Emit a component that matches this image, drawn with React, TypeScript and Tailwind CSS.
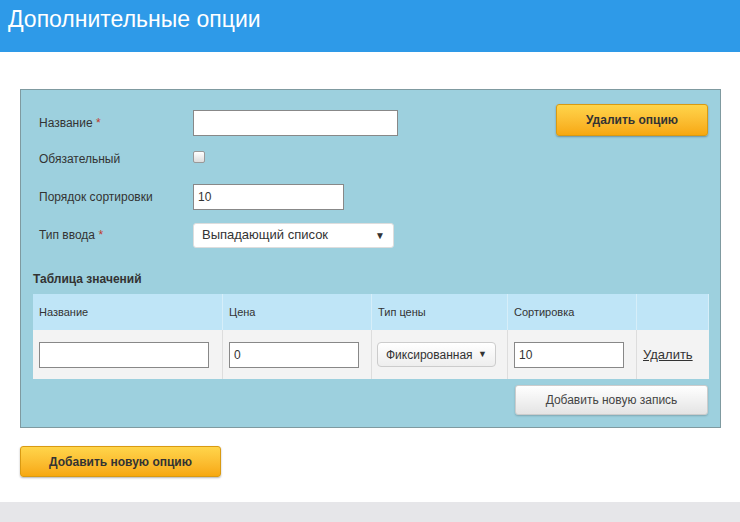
export default function App() {
  const yellow = "bg-gradient-to-b from-[#ffd54a] to-[#f7a80d] border border-[#d99a12] rounded-[3px] text-[12px] font-bold text-[#333] shadow-[0_1px_2px_rgba(0,0,0,0.3)]";
  return (
    <div className="w-[740px] h-[522px] bg-white flex flex-col text-[#333]" style={{ fontFamily: '"Liberation Sans", Arial, sans-serif' }}>
      <div className="h-[52px] bg-[#2e9ae8] flex items-center px-[8px]">
        <h1 className="text-white text-[23px] leading-none -mt-[14px]">Дополнительные опции</h1>
      </div>
      <div className="px-[20px] pt-[37px] flex-1">
        <div className="w-[701px] h-[339px] bg-[#9dd0de] border border-[#7f9aa0] pt-[14px] px-[12px] flex flex-col">
          <div className="flex justify-between">
            <div className="flex flex-col text-[12px]">
              <div className="h-[38px] flex items-center">
                <span className="w-[160px] pl-[6px]">Название <span className="text-[#c0392b]">*</span></span>
                <input className="w-[205px] h-[26px] bg-white border border-[#888]" />
              </div>
              <div className="h-[38px] flex items-center -mt-[2px]">
                <span className="w-[160px] pl-[6px]">Обязательный</span>
                <span className="w-[12px] h-[12px] rounded-[2px] bg-gradient-to-b from-white to-[#ddd] border border-[#999] -mt-[4px]" />
              </div>
              <div className="h-[38px] flex items-center">
                <span className="w-[160px] pl-[6px]">Порядок сортировки</span>
                <div className="w-[151px] h-[26px] bg-white border border-[#888] flex items-center px-[4px]">10</div>
              </div>
              <div className="h-[38px] flex items-center">
                <span className="w-[160px] pl-[6px]">Тип ввода <span className="text-[#c0392b]">*</span></span>
                <div className="w-[201px] h-[25px] bg-white rounded-[3px] border border-[#ddd] flex items-center justify-between px-[8px] text-[13px]">
                  <span>Выпадающий список</span><span className="text-[10px]">▼</span>
                </div>
              </div>
            </div>
            <button className={`${yellow} w-[152px] h-[32px] mt-[0px]`}>Удалить опцию</button>
          </div>
          <div className="text-[12px] font-bold mt-[16px] mb-[6px]">Таблица значений</div>
          <div className="grid grid-cols-[190px_149px_136px_129px_72px] text-[11px]">
            {["Название", "Цена", "Тип цены", "Сортировка", ""].map((h, i) => (
              <div key={i} className="h-[36px] bg-[#bfe5f7] flex items-center pl-[6px] border-r border-[#d6eef9] last:border-r-0">{h}</div>
            ))}
            <div className="h-[49px] bg-[#f3f3f3] flex items-center pl-[6px] border-r border-[#ddd]"><div className="w-[170px] h-[26px] bg-white border border-[#888]" /></div>
            <div className="h-[49px] bg-[#f3f3f3] flex items-center pl-[6px] border-r border-[#ddd]"><div className="w-[130px] h-[26px] bg-white border border-[#888] flex items-center px-[4px] text-[12px]">0</div></div>
            <div className="h-[49px] bg-[#f3f3f3] flex items-center pl-[5px] border-r border-[#ddd]"><div className="w-[119px] h-[25px] bg-gradient-to-b from-white to-[#eee] rounded-[4px] border border-[#ccc] flex items-center justify-between px-[8px] text-[12px]"><span>Фиксированная</span><span className="text-[9px]">▼</span></div></div>
            <div className="h-[49px] bg-[#f3f3f3] flex items-center pl-[6px] border-r border-[#ddd]"><div className="w-[110px] h-[26px] bg-white border border-[#888] flex items-center px-[4px] text-[12px]">10</div></div>
            <div className="h-[49px] bg-[#f3f3f3] flex items-center pl-[6px] text-[13px] underline">Удалить</div>
          </div>
          <div className="flex justify-end mt-[6px]">
            <button className="w-[193px] h-[30px] rounded-[3px] bg-gradient-to-b from-white to-[#e4e4e4] border border-[#ccc] text-[12px] text-[#444] shadow-[0_1px_2px_rgba(0,0,0,0.2)]">Добавить новую запись</button>
          </div>
        </div>
        <button className={`${yellow} w-[201px] h-[31px] mt-[18px]`}>Добавить новую опцию</button>
      </div>
      <div className="h-[20px] bg-[#e6e6e9]" />
    </div>
  );
}
